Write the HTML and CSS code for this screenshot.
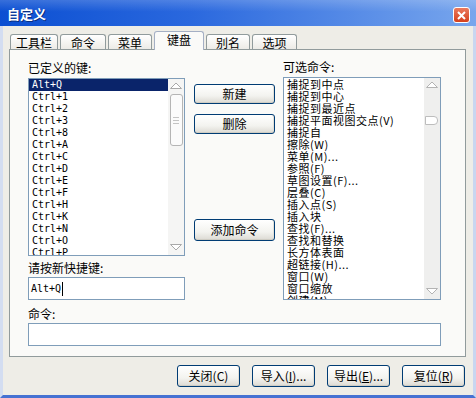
FILE: index.html
```html
<!DOCTYPE html>
<html lang="zh-CN">

<head>
  <meta charset="UTF-8">
  <title>自定义</title>
  <link rel="stylesheet" href="styles.css">
</head>

<body>
  <div class="window">
    <div class="titlebar">
      <span class="title">自定义</span>
      <span class="close-btn">
        <svg width="9" height="9" viewBox="0 0 9 9"><path d="M1 1L8 8M8 1L1 8" stroke="#fff" stroke-width="2" /></svg>
      </span>
    </div>

    <div class="frame">
      <div class="tabs">
        <div class="tab tab-toolbar">工具栏</div>
        <div class="tab tab-cmd">命令</div>
        <div class="tab">菜单</div>
        <div class="tab active">键盘</div>
        <div class="tab">别名</div>
        <div class="tab tab-options">选项</div>
      </div>

      <div class="panel">
        <div class="top-row">
          <!-- defined keys -->
          <div class="col-left">
            <div class="label">已定义的键:</div>
            <div class="listbox keys">
              <ul class="items mono">
                <li class="selected">Alt+Q</li>
                <li>Ctrl+1</li>
                <li>Ctrl+2</li>
                <li>Ctrl+3</li>
                <li>Ctrl+8</li>
                <li>Ctrl+A</li>
                <li>Ctrl+C</li>
                <li>Ctrl+D</li>
                <li>Ctrl+E</li>
                <li>Ctrl+F</li>
                <li>Ctrl+H</li>
                <li>Ctrl+K</li>
                <li>Ctrl+N</li>
                <li>Ctrl+O</li>
                <li>Ctrl+P</li>
              </ul>
              <div class="scrollbar">
                <svg class="arrow" width="14" height="9" viewBox="0 0 14 9"><polygon points="1.5,7.5 7,2 12.5,7.5" fill="#fff" stroke="#a9a9a9" /></svg>
                <div class="thumb"><span></span><span></span><span></span></div>
                <svg class="arrow arrow-down" width="14" height="9" viewBox="0 0 14 9"><polygon points="1.5,1.5 7,7 12.5,1.5" fill="#fff" stroke="#a9a9a9" /></svg>
              </div>
            </div>
            <div class="label label-gap">请按新快捷键:</div>
            <div class="input mono">Alt+Q<span class="caret"></span></div>
          </div>

          <!-- buttons -->
          <div class="col-mid">
            <button class="btn btn-new">新建</button>
            <button class="btn btn-del">删除</button>
            <button class="btn btn-add">添加命令</button>
          </div>

          <!-- commands -->
          <div class="col-right">
            <div class="label">可选命令:</div>
            <div class="listbox commands">
              <ul class="items cmd-items">
                <li>捕捉到中点</li>
                <li>捕捉到中心</li>
                <li>捕捉到最近点</li>
                <li>捕捉平面视图交点(V)</li>
                <li>捕捉自</li>
                <li>擦除(W)</li>
                <li>菜单(M)...</li>
                <li>参照(F)</li>
                <li>草图设置(F)...</li>
                <li>层叠(C)</li>
                <li>插入点(S)</li>
                <li>插入块</li>
                <li>查找(F)...</li>
                <li>查找和替换</li>
                <li>长方体表面</li>
                <li>超链接(H)...</li>
                <li>窗口(W)</li>
                <li>窗口缩放</li>
                <li>创建(M)</li>
              </ul>
              <div class="scrollbar">
                <svg class="arrow" width="14" height="9" viewBox="0 0 14 9"><polygon points="1.5,7.5 7,2 12.5,7.5" fill="#fff" stroke="#b3b3b3" /></svg>
                <div class="thumb-small"></div>
                <svg class="arrow arrow-down" width="14" height="9" viewBox="0 0 14 9"><polygon points="1.5,1.5 7,7 12.5,1.5" fill="#fff" stroke="#b3b3b3" /></svg>
              </div>
            </div>
          </div>
        </div>

        <div class="label label-cmd">命令:</div>
        <div class="input input-wide"></div>
      </div>

      <div class="footer">
        <button class="btn btn-foot">关闭(C)</button>
        <button class="btn btn-foot">导入(<u>I</u>)...</button>
        <button class="btn btn-foot">导出(<u>E</u>)...</button>
        <button class="btn btn-foot">复位(<u>R</u>)</button>
      </div>
    </div>
  </div>
</body>

</html>
```

FILE: styles.css
```css
body {
  margin: 0;
  padding: 0;
  font-family: 'Noto Sans CJK SC', sans-serif;
  font-size: 12px;
  color: #000;
}

.window {
  width: 476px;
  height: 398px;
  display: flex;
  flex-direction: column;
}

.titlebar {
  height: 26px;
  display: flex;
  align-items: center;
  justify-content: space-between;
  padding: 0 6px 0 7px;
  background: linear-gradient(rgba(255, 255, 255, 0.18), rgba(255, 255, 255, 0) 45%),
    linear-gradient(to right, #0b4fd2 0%, #2a68de 40%, #78a6ed 100%);
}

.title {
  color: #fff;
  font-weight: bold;
  font-size: 13px;
  line-height: 14px;
  text-shadow: 1px 1px 0 #0a2f80;
  padding-top: 2px;
}

.close-btn {
  width: 15px;
  height: 14px;
  border: 1px solid #fff;
  border-radius: 3px;
  background: linear-gradient(#ea7a5e, #d5401c);
  display: flex;
  align-items: center;
  justify-content: center;
  margin-top: 4px;
}

.frame {
  flex: 1;
  background: #eeede7;
  border-left: 3px solid #d3ddf1;
  border-right: 3px solid #c9d6f0;
  border-bottom: 3px solid #4672d2;
  padding: 0 7px 0 6px;
}

/* tabs */
.tabs {
  display: flex;
  align-items: flex-end;
  height: 19px;
  padding: 5px 0 0 1px;
  margin-bottom: -1px;
  position: relative;
  z-index: 1;
}

.tab {
  width: 44px;
  height: 15px;
  box-sizing: border-box;
  margin: 0 2px 1px 0;
  border: 1px solid #919b9c;
  border-bottom: none;
  border-radius: 3px 3px 0 0;
  background: linear-gradient(#ffffff, #ecebe6);
  text-align: center;
  line-height: 16px;
}

.tab-toolbar {
  width: 48px;
}

.tab-cmd {
  width: 46px;
}

.tab-options {
  width: 45px;
}

.tab.active {
  width: 50px;
  height: 19px;
  margin-bottom: 0;
  background: #fafaf8;
  line-height: 15px;
  border-color: #a4afc4;
}

.panel {
  height: 308px;
  box-sizing: border-box;
  border: 1px solid #919b9c;
  background: #fafaf8;
  padding: 11px 0 0 18px;
}

.top-row {
  display: flex;
}

.label {
  height: 14px;
  line-height: 14px;
  margin-bottom: 3px;
}

.label-gap {
  margin-top: 5px;
  margin-bottom: 2px;
}

.label-cmd {
  margin-top: 7px;
  margin-bottom: 2px;
}

.col-left {
  width: 157px;
}

.col-mid {
  width: 81px;
  margin-left: 9px;
  display: flex;
  flex-direction: column;
}

.col-right {
  width: 158px;
  margin-left: 8px;
  margin-top: -1px;
}

.listbox {
  box-sizing: border-box;
  border: 1px solid #7f9db9;
  background: #fff;
  display: flex;
  overflow: hidden;
}

.keys {
  height: 178px;
}

.commands {
  height: 223px;
}

.items {
  list-style: none;
  margin: 0;
  padding: 0;
  flex: 1;
  overflow: hidden;
}

.items li {
  height: 12px;
  line-height: 12px;
  padding-left: 3px;
  white-space: nowrap;
}

.cmd-items li {
  font-size: 11px;
  letter-spacing: 0.5px;
}

.mono {
  font-family: 'DejaVu Sans Mono', 'Liberation Mono', monospace;
  font-size: 10px;
}

.items li.selected {
  background: #0a246a;
  color: #fff;
}

.scrollbar {
  width: 16px;
  background: #f5f5f4;
  display: flex;
  flex-direction: column;
  align-items: center;
}

.commands .scrollbar {
  background: #efefee;
}

.arrow {
  display: block;
  margin-top: 2px;
}

.arrow-down {
  margin-top: auto;
  margin-bottom: 3px;
}

.thumb {
  width: 11px;
  height: 50px;
  margin-top: 4px;
  border: 1px solid #b5b5b5;
  border-radius: 3px;
  background: #fbfbfb;
  display: flex;
  flex-direction: column;
  align-items: center;
  justify-content: center;
  gap: 2px;
}

.thumb span {
  display: block;
  width: 6px;
  height: 1px;
  background: #c4c4c4;
}

.thumb-small {
  width: 11px;
  height: 7px;
  margin-top: 27px;
  margin-right: 2px;
  border: 1px solid #bdbdbd;
  border-radius: 0 4px 4px 0;
  background: #fff;
}

.input {
  height: 23px;
  box-sizing: border-box;
  border: 1px solid #7f9db9;
  background: #fff;
  padding-left: 2px;
  line-height: 21px;
  display: flex;
  align-items: center;
}

.input-wide {
  width: 413px;
}

.caret {
  display: inline-block;
  width: 1px;
  height: 14px;
  background: #000;
  margin-left: 1px;
}

/* buttons */
.btn {
  font-family: 'Noto Sans CJK SC', sans-serif;
  font-size: 12px;
  color: #000;
  padding: 0;
  box-sizing: border-box;
  border: 1px solid #003c74;
  border-radius: 3px;
  background: linear-gradient(#ffffff 0%, #f3f3ef 60%, #dcdad3 100%);
  box-shadow: inset 0 -1px 0 #cfcdc4, inset -1px 0 0 #e2e0d8;
  line-height: 16px;
}

.btn-new,
.btn-del {
  width: 81px;
  height: 20px;
}

.btn-new {
  margin-top: 23px;
}

.btn-del {
  margin-top: 10px;
}

.btn-add {
  width: 81px;
  height: 22px;
  margin-top: 85px;
}

.footer {
  display: flex;
  justify-content: flex-end;
  gap: 12px;
  margin-top: 8px;
  padding-right: 1px;
}

.btn-foot {
  width: 63px;
  height: 22px;
}
```
